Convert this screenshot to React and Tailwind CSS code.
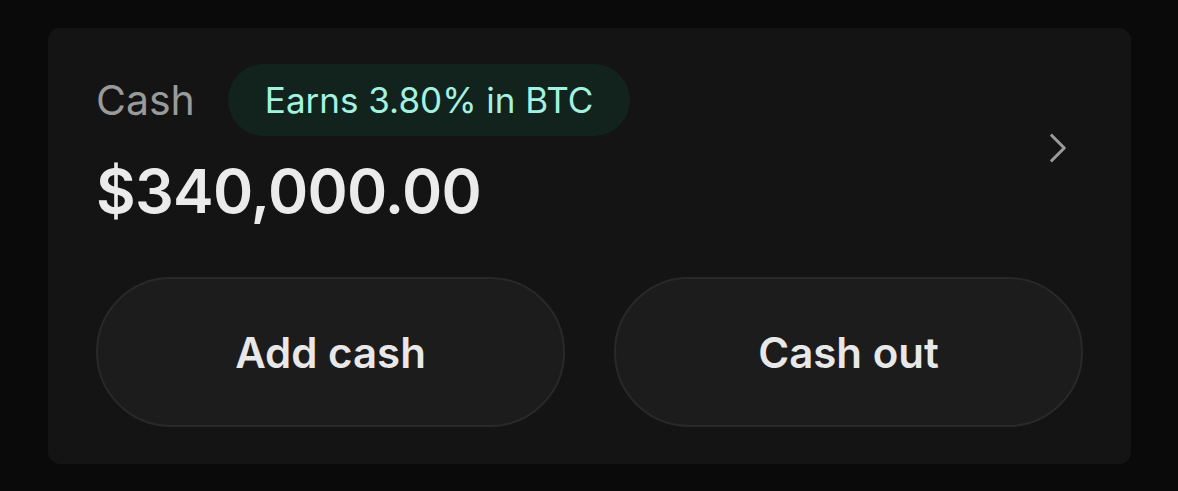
import { ChevronRight } from "lucide-react";

const CashCard = () => {
  return (
    <div className="rounded-[12px] bg-[#141414] px-12 pt-9 pb-[37px]">
      <div className="flex items-center justify-between">
        <div className="flex flex-col">
          <div className="flex items-center gap-[33px]">
            <span className="text-[41px] leading-none text-[#9a9a9a]">Cash</span>
            <span className="flex h-[72px] items-center rounded-full bg-[#12231e] px-[37px] text-[35px] text-[#a3f2e0]">
              Earns 3.80% in BTC
            </span>
          </div>
          <div className="mt-[25px] text-[61px] font-semibold leading-none tracking-[-0.7px] text-[#ebebeb]">
            $340,000.00
          </div>
        </div>
        <ChevronRight
          className="mt-[10px] text-[#9a9a9a]"
          size={50}
          strokeWidth={1.5}
        />
      </div>

      <div className="mt-[55px] grid grid-cols-2 gap-[49px]">
        <button className="flex h-[150px] items-center justify-center rounded-full border-2 border-[#292929] bg-[#1c1c1c] text-[42px] font-semibold text-[#e8e8e8]">
          Add cash
        </button>
        <button className="flex h-[150px] items-center justify-center rounded-full border-2 border-[#292929] bg-[#1c1c1c] text-[42px] font-semibold text-[#e8e8e8]">
          Cash out
        </button>
      </div>
    </div>
  );
};

export default function App() {
  return (
    <div
      className="h-[491px] w-[1178px] bg-[#0a0a0a] pt-[28px] pl-[48px] pr-[47px]"
      style={{ fontFamily: "Inter, 'Noto Sans', sans-serif" }}
    >
      <CashCard />
    </div>
  );
}
